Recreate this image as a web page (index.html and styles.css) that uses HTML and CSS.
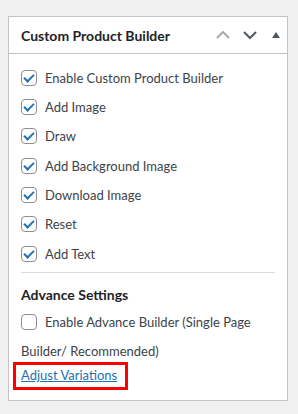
FILE: index.html
```html
<html>

<head>
    <link rel="stylesheet" href="styles.css">
</head>

<body>
    <div class="postbox">
        <div class="postbox-header">
            <h2 class="hndle">Custom Product Builder</h2>
            <div class="handle-actions">
                <button class="handle-btn up" title="Move up">
                    <svg width="14" height="10" viewBox="0 0 14 10"><path d="M1 8 L7 2 L13 8" fill="none" stroke="currentColor" stroke-width="2"/></svg>
                </button>
                <button class="handle-btn down" title="Move down">
                    <svg width="14" height="10" viewBox="0 0 14 10"><path d="M1 2 L7 8 L13 2" fill="none" stroke="currentColor" stroke-width="2"/></svg>
                </button>
                <button class="handle-btn toggle" title="Toggle panel">
                    <svg width="10" height="8" viewBox="0 0 10 8"><path d="M1 7 L5 1 L9 7 Z" fill="currentColor"/></svg>
                </button>
            </div>
        </div>
        <div class="inside">
            <label class="check-row"><span class="box checked"></span>Enable Custom Product Builder</label>
            <label class="check-row"><span class="box checked"></span>Add Image</label>
            <label class="check-row"><span class="box checked"></span>Draw</label>
            <label class="check-row"><span class="box checked"></span>Add Background Image</label>
            <label class="check-row"><span class="box checked"></span>Download Image</label>
            <label class="check-row"><span class="box checked"></span>Reset</label>
            <label class="check-row"><span class="box checked"></span>Add Text</label>

            <hr class="sep">

            <h3 class="section-title">Advance Settings</h3>
            <label class="check-row wrap"><span class="box"></span>Enable Advance Builder (Single Page Builder/ Recommended)</label>
            <div class="link-row">
                <span class="highlight"><a href="#">Adjust Variations</a></span>
            </div>
        </div>
    </div>
</body>

</html>
```

FILE: styles.css
```css
body {
    margin: 0;
    padding: 16px 0 0 8px;
    background: #f0f0f1;
    font-family: Lato, "Noto Sans", sans-serif;
    font-size: 13px;
    color: #3c434a;
}

.postbox {
    width: 278px;
    border: 1px solid #c3c4c7;
    background: #fff;
}

.postbox-header {
    display: flex;
    align-items: center;
    justify-content: space-between;
    height: 36px;
    border-bottom: 1px solid #c3c4c7;
    padding-left: 12px;
}

.hndle {
    margin: 0;
    font-size: 14px;
    font-weight: 700;
    color: #1d2327;
}

.handle-actions {
    display: flex;
    align-items: center;
    padding-right: 6px;
}

.handle-btn {
    background: none;
    border: none;
    padding: 0;
    margin: 0;
    height: 36px;
    display: flex;
    align-items: center;
    justify-content: center;
    color: #787c82;
}

.handle-btn.up {
    width: 14px;
    color: #a7aaad;
}

.handle-btn.down {
    width: 14px;
    margin-left: 13px;
    color: #50575e;
}

.handle-btn.toggle {
    width: 10px;
    margin-left: 14px;
    color: #50575e;
}

.inside {
    padding: 9px 12px 10px 12px;
}

.check-row {
    display: flex;
    align-items: center;
    height: 29.33px;
}

.box {
    flex: none;
    width: 14px;
    height: 14px;
    border: 1px solid #8c8f94;
    border-radius: 4px;
    margin-right: 8px;
    display: flex;
    align-items: center;
    justify-content: center;
}

.box.checked::before {
    content: "";
    width: 4px;
    height: 8px;
    border-right: 2px solid #2271b1;
    border-bottom: 2px solid #2271b1;
    transform: translate(0, -1px) rotate(45deg);
}

.check-row.wrap {
    display: block;
    height: auto;
    line-height: 29px;
}

.check-row.wrap .box {
    display: inline-block;
    vertical-align: -3px;
}

.sep {
    border: none;
    border-top: 1px solid #dcdcde;
    margin: 4px 0 0 0;
}

.section-title {
    margin: 13px 0 5px 0;
    font-size: 14px;
    font-weight: 700;
    color: #1d2327;
}

.link-row {
    margin-left: -8px;
    margin-top: -4px;
}

.highlight {
    display: inline-block;
    border: 3px solid #f00;
    padding: 2px 8px 4px 5px;
}

.highlight a {
    color: #2271b1;
}
```
